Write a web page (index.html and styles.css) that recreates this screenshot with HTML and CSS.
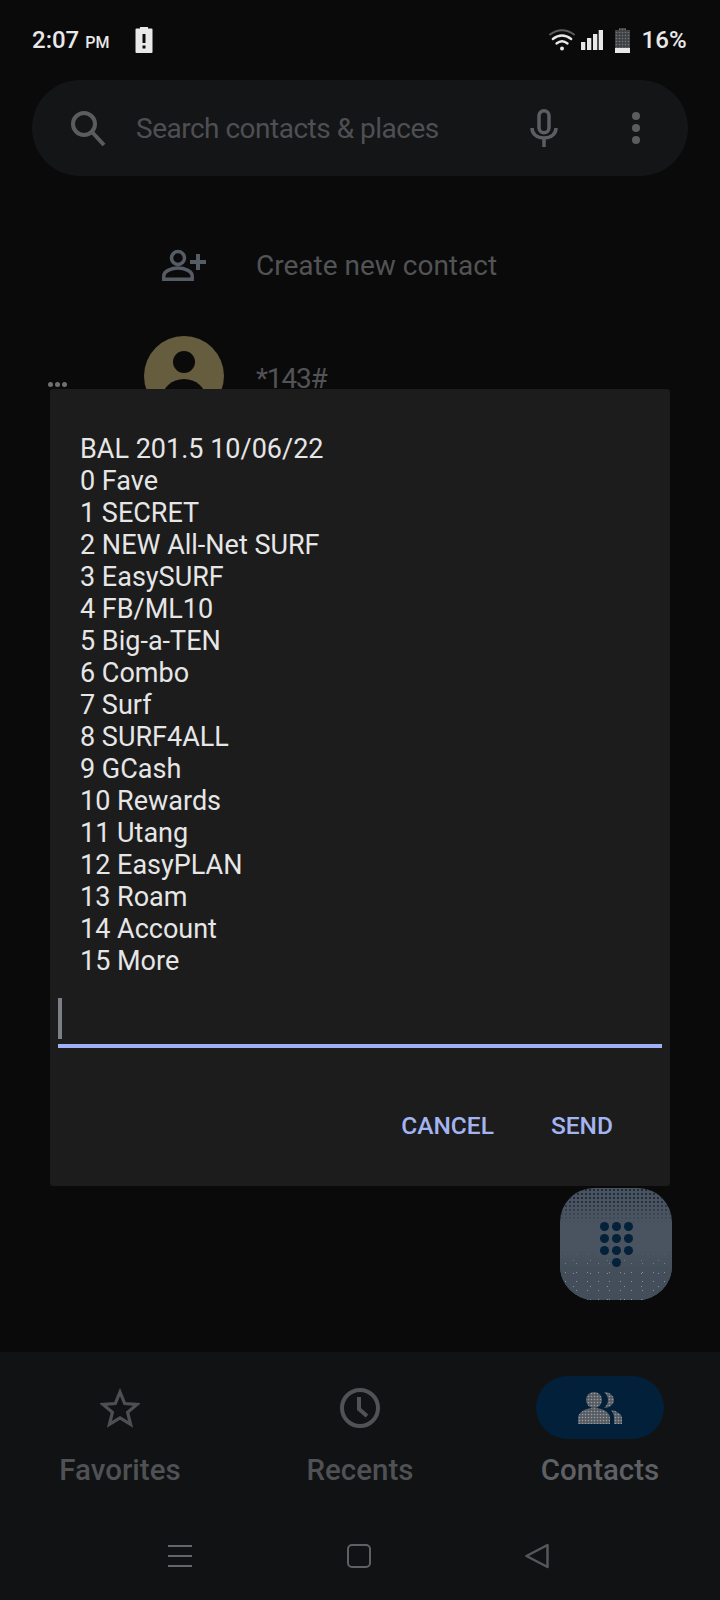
FILE: index.html
```html
<html>

<head>
    <meta charset="UTF-8">
    <title>Contacts</title>
    <link rel="stylesheet" href="styles.css">
</head>

<body>
    <div class="screen">
        <div class="statusBar">
            <div class="statusLeft">
                <span class="clock">2:07 <small>PM</small></span>
                <svg class="alertBattery" width="20" height="28" viewBox="0 0 20 28">
                    <path d="M6 2.500V1h8v1.500h3.500a1 1 0 0 1 1 1V26a1 1 0 0 1-1 1H2.500a1 1 0 0 1-1-1V3.500a1 1 0 0 1 1-1z" fill="#e8e8e8" />
                    <path d="M8.500 8h3v9h-3zM8.500 19.500h3v3h-3z" fill="#0a0a0b" />
                </svg>
            </div>
            <div class="statusRight">
                <svg class="wifi" width="26" height="22" viewBox="0 0 26 22" fill="none" stroke-linecap="round">
                    <path d="M1 5.500Q13 -3 25 5.500" stroke="#5c5c5c" stroke-width="2" />
                    <path d="M3.800 10Q13 3 22.200 10" stroke="#e8e8e8" stroke-width="2.300" />
                    <path d="M7.500 14.500Q13 10 18.500 14.500" stroke="#e8e8e8" stroke-width="2.300" />
                    <circle cx="13" cy="19.500" r="2" fill="#e8e8e8" />
                </svg>
                <svg class="bars" width="22" height="20" viewBox="0 0 22 20" fill="#e8e8e8">
                    <rect x="0" y="12" width="4.300" height="8" />
                    <rect x="6" y="8" width="4.300" height="12" />
                    <rect x="12" y="4" width="4.300" height="16" />
                    <rect x="17.700" y="0" width="4.300" height="20" />
                </svg>
                <svg class="battery" width="15" height="25" viewBox="0 0 15 25">
                    <defs>
                        <pattern id="batteryDots" width="3" height="3" patternUnits="userSpaceOnUse">
                            <rect width="3" height="3" fill="#3f4145" />
                            <circle cx="1.500" cy="1.500" r="0.800" fill="#75777b" />
                        </pattern>
                    </defs>
                    <path d="M4 2V0h7v2h4v23H0V2z" fill="url(#batteryDots)" />
                    <rect x="0" y="20" width="15" height="5" fill="#e8e8e8" />
                </svg>
                <span class="percent">16%</span>
            </div>
        </div>

        <div class="searchBar">
            <svg class="searchIcon" width="40" height="40" viewBox="0 0 40 40" fill="none" stroke="#5b5c5e" stroke-width="4">
                <circle cx="16" cy="16" r="11" />
                <path d="M24 24L36 37" />
            </svg>
            <span class="searchText">Search contacts &amp; places</span>
            <svg class="micIcon" width="28" height="38" viewBox="0 0 28 38" fill="none" stroke="#5b5e63" stroke-width="3.500">
                <rect x="9" y="1.800" width="10" height="22" rx="5" />
                <path d="M2 19c0 6 5 10 12 10s12-4 12-10M14 29v9" />
            </svg>
            <div class="moreDots"><i></i><i></i><i></i></div>
        </div>

        <div class="list">
            <div class="listRow">
                <svg class="rowIcon" width="44" height="32" viewBox="0 0 44 32" fill="none" stroke="#565c66" stroke-width="3.500">
                    <circle cx="16" cy="9" r="6.500" />
                    <path d="M1.800 30.200v-3.200c0-5 8-8 14.200-8s14.200 3 14.200 8v3.200z" />
                    <path d="M36 5v16M28 13h16" stroke-width="4" />
                </svg>
                <span class="rowText">Create new contact</span>
            </div>
            <div class="listRow contactRow">
                <div class="avatar">
                    <i class="avatarHead"></i>
                    <i class="avatarBody"></i>
                </div>
                <span class="rowText contactName">*143#</span>
            </div>
        </div>

        <div class="bottomNav">
            <div class="tabs">
                <div class="tab">
                    <div class="tabIcon">
                        <svg width="40" height="40" viewBox="0 0 40 40" fill="none" stroke="#4d4f52" stroke-width="3.200">
                            <path d="M20 4l4.700 11.500 12.300.9-9.400 8 3 12L20 29.900 9.400 36.400l3-12-9.400-8 12.300-.9z" />
                        </svg>
                    </div>
                    <span>Favorites</span>
                </div>
                <div class="tab">
                    <div class="tabIcon">
                        <svg width="42" height="42" viewBox="0 0 42 42" fill="none" stroke="#505255" stroke-width="4">
                            <circle cx="21" cy="21" r="18" />
                            <path d="M20 10v12l8 7" />
                        </svg>
                    </div>
                    <span>Recents</span>
                </div>
                <div class="tab activeLabel">
                    <div class="tabIcon activeTab">
                        <svg width="44" height="32" viewBox="0 0 44 32">
                            <defs>
                                <pattern id="contactDots" width="3" height="3" patternUnits="userSpaceOnUse">
                                    <rect width="3" height="3" fill="#565c63" />
                                    <circle cx="1.500" cy="1.500" r="0.800" fill="#989ca1" />
                                </pattern>
                            </defs>
                            <g fill="url(#contactDots)">
                                <circle cx="16" cy="8" r="8" />
                                <path d="M0 32v-6c0-6 8-10 16-10s16 4 16 10v6z" />
                                <path d="M26 0c5 0 10 3.500 10 8s-5 8-10 8c2.500-2 4-5 4-8s-1.500-6-4-8z" />
                                <path d="M33 18c6 1 11 4 11 8v6h-8v-6c0-3-1-6-3-8z" />
                            </g>
                        </svg>
                    </div>
                    <span>Contacts</span>
                </div>
            </div>
            <div class="navKeys">
                <div class="menuKey"><i></i><i></i><i></i></div>
                <div class="homeKey"></div>
                <svg width="24" height="26" viewBox="0 0 24 26" fill="none" stroke="#55575b" stroke-width="2.500" stroke-linejoin="round">
                    <path d="M22.500 2v22L1.500 13z" />
                </svg>
            </div>
        </div>

        <div class="sideDots"><i></i><i></i><i></i></div>

        <div class="dialog">
            <div class="ussdText">
                <div>BAL 201.5 10/06/22</div>
                <div>0 Fave</div>
                <div>1 SECRET</div>
                <div>2 NEW All-Net SURF</div>
                <div>3 EasySURF</div>
                <div>4 FB/ML10</div>
                <div>5 Big-a-TEN</div>
                <div>6 Combo</div>
                <div>7 Surf</div>
                <div>8 SURF4ALL</div>
                <div>9 GCash</div>
                <div>10 Rewards</div>
                <div>11 Utang</div>
                <div>12 EasyPLAN</div>
                <div>13 Roam</div>
                <div>14 Account</div>
                <div>15 More</div>
            </div>
            <div class="ussdInput"><i class="cursor"></i></div>
            <div class="dialogButtons">
                <span>CANCEL</span>
                <span>SEND</span>
            </div>
        </div>

        <div class="fab">
            <div class="dialpad">
                <i></i><i></i><i></i>
                <i></i><i></i><i></i>
                <i></i><i></i><i></i>
                <i class="lastKey"></i>
            </div>
        </div>
    </div>
</body>

</html>
```

FILE: styles.css
```css
body {
    margin: 0;
    background-color: #0a0a0b;
    font-family: "Roboto", "Liberation Sans", sans-serif;
}

.screen {
    position: relative;
    width: 720px;
    height: 1600px;
    display: flex;
    flex-direction: column;
    overflow: hidden;
    background-color: #0a0a0b;
}

/* status bar */

.statusBar {
    height: 80px;
    padding: 0 33px 0 32px;
    box-sizing: border-box;
    display: flex;
    justify-content: space-between;
    align-items: center;
    color: #e8e8e8;
}

.statusLeft,
.statusRight {
    display: flex;
    align-items: center;
}

.clock {
    font-size: 24px;
    font-weight: 500;
    width: 102px;
}

.clock small {
    font-size: 16px;
}

.wifi {
    margin-right: 6px;
}

.bars {
    margin-right: 12px;
}

.battery {
    margin-right: 11px;
}

.percent {
    font-size: 24px;
    font-weight: 500;
    letter-spacing: 0.2px;
}

/* search */

.searchBar {
    height: 96px;
    margin: 0 32px;
    padding: 0 48px 0 36px;
    display: flex;
    align-items: center;
    background-color: #141517;
    border-radius: 48px;
}

.searchIcon {
    margin-right: 28px;
}

.searchText {
    flex: 1;
    color: #4e4f52;
    font-size: 28px;
    letter-spacing: -0.5px;
}

.micIcon {
    margin-right: 74px;
}

.moreDots {
    display: flex;
    flex-direction: column;
    gap: 4px;
}

.moreDots i {
    width: 8px;
    height: 8px;
    border-radius: 50%;
    background-color: #5b5c5e;
}

/* contact list */

.list {
    flex: 1;
    padding-top: 51px;
}

.listRow {
    display: flex;
    align-items: center;
    height: 76px;
    padding-left: 162px;
}

.rowIcon {
    margin-right: 50px;
}

.rowText {
    color: #525355;
    font-size: 28px;
}

.contactRow {
    margin-top: 33px;
    padding-left: 144px;
    height: 80px;
}

.contactName {
    letter-spacing: -1.2px;
    padding-top: 4px;
}

.avatar {
    position: relative;
    width: 80px;
    height: 80px;
    margin-right: 32px;
    border-radius: 50%;
    background-color: #665c3e;
    overflow: hidden;
}

.avatarHead,
.avatarBody {
    position: absolute;
    background-color: #0a0a0b;
    border-radius: 50%;
}

.avatarHead {
    left: 29px;
    top: 15px;
    width: 22px;
    height: 22px;
}

.avatarBody {
    left: 18px;
    top: 43px;
    width: 44px;
    height: 40px;
}

/* bottom navigation */

.bottomNav {
    height: 248px;
    background-color: #111214;
}

.tabs {
    display: flex;
    padding-top: 24px;
    height: 138px;
    box-sizing: border-box;
}

.tab {
    flex: 1;
    display: flex;
    flex-direction: column;
    align-items: center;
    color: #4f5154;
    font-size: 29.5px;
    font-weight: 500;
    gap: 14px;
}

.tabIcon {
    height: 63px;
    width: 128px;
    display: flex;
    align-items: center;
    justify-content: center;
}

.activeTab {
    background-color: #03203a;
    border-radius: 32px;
}

.activeLabel {
    color: #5e6064;
}

.navKeys {
    display: flex;
    justify-content: space-between;
    align-items: center;
    padding: 53px 171px 0 168px;
}

.menuKey {
    display: flex;
    flex-direction: column;
    gap: 8px;
}

.menuKey i {
    display: block;
    width: 24px;
    height: 2px;
    background-color: #63656a;
}

.homeKey {
    width: 20px;
    height: 20px;
    border: 2px solid #5f6064;
    border-radius: 5px;
}

/* overlays */

.sideDots {
    position: absolute;
    left: 48px;
    top: 382px;
    display: flex;
    gap: 2px;
}

.sideDots i {
    width: 5px;
    height: 5px;
    border-radius: 50%;
    background-color: #6e7072;
}

.dialog {
    position: absolute;
    left: 50px;
    top: 389px;
    width: 620px;
    height: 797px;
    background-color: #1c1c1c;
    border-radius: 3px;
}

.ussdText {
    padding: 44px 0 0 30px;
    color: #e6e6e6;
    font-size: 27px;
    line-height: 32px;
}

.ussdInput {
    height: 46px;
    margin: 16px 8px 0 8px;
    padding-top: 5px;
    border-bottom: 4px solid #9fb0f5;
}

.cursor {
    display: block;
    width: 4px;
    height: 41px;
    background-color: #7c7f86;
}

.dialogButtons {
    display: flex;
    justify-content: flex-end;
    gap: 57px;
    padding: 63px 57px 0 0;
    color: #a4b4f0;
    font-size: 24.5px;
    font-weight: 500;
}

.fab {
    position: absolute;
    left: 560px;
    top: 1188px;
    width: 112px;
    height: 112px;
    display: flex;
    align-items: center;
    justify-content: center;
    border-radius: 34px;
    background-color: #4a5460;
    overflow: hidden;
}

.fab::before,
.fab::after {
    content: "";
    position: absolute;
    left: 0;
    right: 0;
}

.fab::before {
    top: 0;
    height: 36px;
    background-image: radial-gradient(#1f2c3c 1px, transparent 1.4px);
    background-size: 4px 4px;
    -webkit-mask-image: linear-gradient(#000 30%, transparent);
    mask-image: linear-gradient(#000 30%, transparent);
}

.fab::after {
    bottom: 0;
    height: 50px;
    background-color: #434e5a;
    background-image: radial-gradient(#8a939c 0.6px, transparent 0.9px), radial-gradient(#8a939c 0.6px, transparent 0.9px);
    background-size: 11px 9px, 17px 13px;
    background-position: 0 0, 5px 4px;
    -webkit-mask-image: linear-gradient(transparent, #000 40%);
    mask-image: linear-gradient(transparent, #000 40%);
}

.dialpad {
    position: relative;
    z-index: 1;
    display: grid;
    grid-template-columns: repeat(3, 9px);
    gap: 3px;
}

.dialpad i {
    height: 9px;
    border-radius: 50%;
    background-color: #04213a;
}

.lastKey {
    grid-column: 2;
}
```
